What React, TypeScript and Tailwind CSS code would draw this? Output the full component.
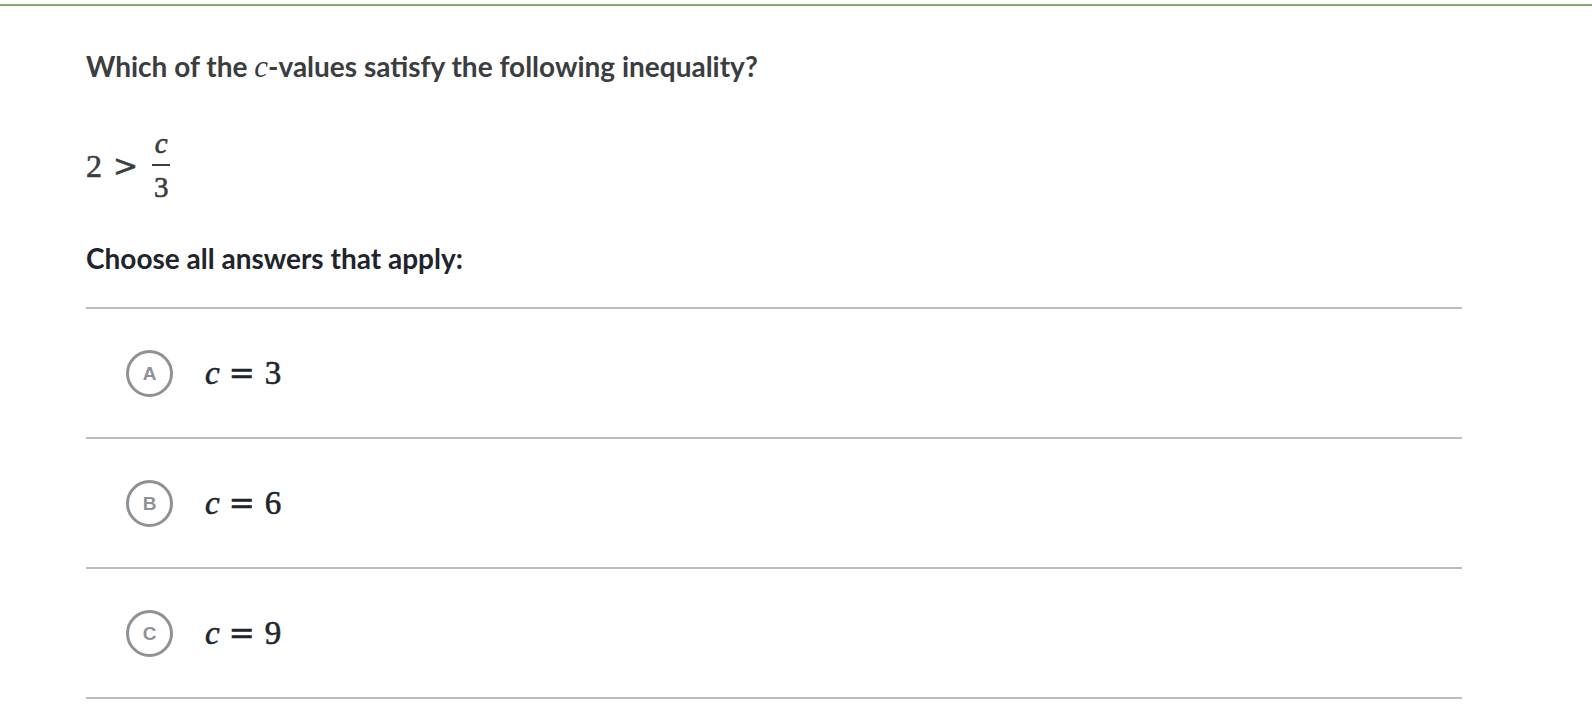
import React from "react";

type Choice = { letter: string; value: string };

const choices: Choice[] = [
  { letter: "A", value: "3" },
  { letter: "B", value: "6" },
  { letter: "C", value: "9" },
];

const mathFont = "font-['Liberation_Serif',serif] [-webkit-text-stroke:0.6px]";
const opFont = "font-['DejaVu_Serif',serif]";

const ChoiceRow = ({ choice }: { choice: Choice }) => {
  return (
    <div className="h-[130px] flex items-center border-b-2 border-[#bcbcbc] pl-[40px]">
      <div className="w-[47px] h-[47px] rounded-full border-[3px] border-[#8f9195] flex items-center justify-center">
        <span className="font-['Liberation_Sans',sans-serif] font-bold text-[19px] text-[#8f9195] leading-none">
          {choice.letter}
        </span>
      </div>
      <div className={`ml-[32px] ${mathFont} text-[33px] text-[#21242c] leading-none flex items-center`}>
        <span className="italic">c</span>
        <span className={`${opFont} text-[31px] ml-[9px] mr-[10px]`}>=</span>
        <span>{choice.value}</span>
      </div>
    </div>
  );
};

const App = () => {
  return (
    <div className="w-[1592px] h-[728px] bg-white overflow-hidden">
      <div className="h-[4px]" />
      <div className="h-[2px] bg-[#87a877]" />
      <div className="pl-[86px] pr-[130px]">
        <h1 className="mt-[44px] font-['Lato',sans-serif] font-bold text-[28px] leading-[32px] text-[#3b3d40]">
          Which of the <span className="font-['Liberation_Serif',serif] italic font-normal text-[31px]">c</span>-values
          satisfy the following inequality?
        </h1>

        <div className={`mt-[47px] h-[71px] flex items-center ${mathFont} text-[32px] text-[#3b3d40] leading-none`}>
          <span>2</span>
          <span className={`${opFont} text-[30px] ml-[11px] mr-[14px]`}>&gt;</span>
          <span className="inline-flex flex-col items-center text-[29px]">
            <span className="italic pb-[6px]">c</span>
            <span className="w-[18px] h-[2px] bg-[#3b3d40]" />
            <span className="pt-[7px]">3</span>
          </span>
        </div>

        <h2 className="mt-[41px] font-['Lato',sans-serif] font-bold text-[28px] leading-[32px] text-[#21242c]">
          Choose all answers that apply:
        </h2>

        <div className="mt-[33px] border-t-2 border-[#bcbcbc]">
          {choices.map((c) => (
            <ChoiceRow key={c.letter} choice={c} />
          ))}
        </div>
      </div>
    </div>
  );
};

export default App;
